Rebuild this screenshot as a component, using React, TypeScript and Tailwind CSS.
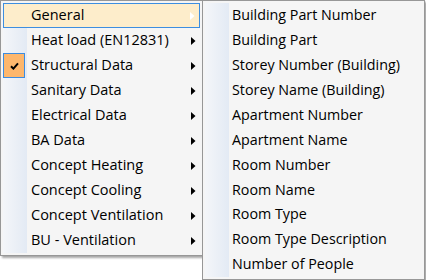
const mainItems = [
  "General",
  "Heat load (EN12831)",
  "Structural Data",
  "Sanitary Data",
  "Electrical Data",
  "BA Data",
  "Concept Heating",
  "Concept Cooling",
  "Concept Ventilation",
  "BU - Ventilation",
];

const subItems = [
  "Building Part Number",
  "Building Part",
  "Storey Number (Building)",
  "Storey Name (Building)",
  "Apartment Number",
  "Apartment Name",
  "Room Number",
  "Room Name",
  "Room Type",
  "Room Type Description",
  "Number of People",
];

function Arrow({ white }: { white?: boolean }) {
  return (
    <svg width="5" height="8" viewBox="0 0 5 8" className="absolute right-[4px] top-1/2 -translate-y-1/2">
      <path d="M0 0 L4.5 4 L0 8 Z" fill={white ? "#ffffff" : "#000000"} />
    </svg>
  );
}

export default function App() {
  return (
    <div
      className="relative w-[426px] h-[280px] bg-white overflow-hidden text-black"
      style={{ fontFamily: '"Open Sans", "Noto Sans", sans-serif' }}
    >
      {/* main menu */}
      <div className="w-[203px] border border-[#979797] bg-[#f5f5f5] p-[2px] shadow-[2px_2px_2px_rgba(0,0,0,0.35)]">
        <div className="relative">
          <div className="absolute left-0 top-0 bottom-0 w-[24px] bg-gradient-to-r from-[#f4f6f9] to-[#e3eaf4]" />
          {mainItems.map((item, i) => (
            <div
              key={item}
              className={
                "relative h-[25px] flex items-center pl-[28px] text-[14.5px] leading-none " +
                (i === 0 ? "bg-[#fdedcb] border border-[#3d8ee0]" : "")
              }
            >
              {i === 2 && (
                <div className="absolute left-0 top-0 w-[22px] h-[25px] bg-[#fdb76d] border border-[#3c8ce0] flex items-center justify-center">
                  <svg width="9" height="8" viewBox="0 0 9 8">
                    <path d="M1 4.2 L3.4 6.6 L8 1.4" fill="none" stroke="#000" strokeWidth="2" />
                  </svg>
                </div>
              )}
              <span className={i === 0 ? "-ml-px" : ""}>{item}</span>
              <Arrow white={i === 0} />
            </div>
          ))}
        </div>
      </div>

      {/* submenu */}
      <div className="absolute left-[202px] top-0 w-[223px] border border-[#979797] bg-[#f5f5f5] p-[2px] shadow-[2px_2px_2px_rgba(0,0,0,0.35)]">
        <div className="relative">
          <div className="absolute left-0 top-0 bottom-0 w-[24px] bg-gradient-to-r from-[#f4f6f9] to-[#e3eaf4]" />
          {subItems.map((item) => (
            <div key={item} className="relative h-[24.9px] flex items-center pl-[27px] text-[14.3px] leading-none">
              {item}
            </div>
          ))}
        </div>
      </div>
    </div>
  );
}
